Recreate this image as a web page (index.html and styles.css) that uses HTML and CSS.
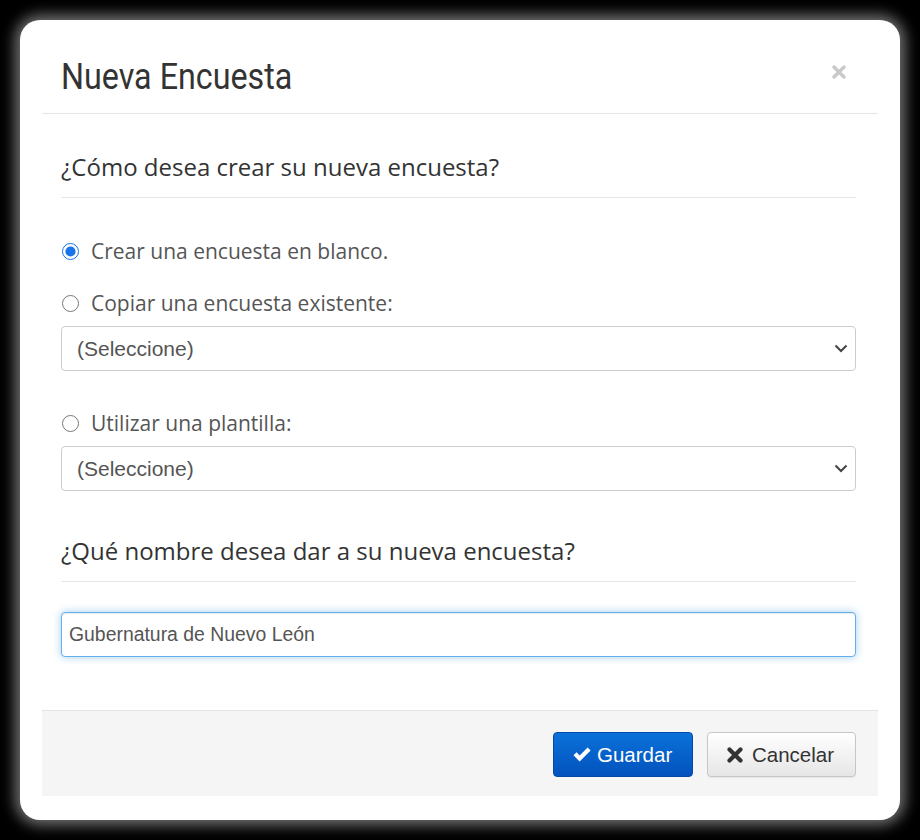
FILE: index.html
```html
<!DOCTYPE html>
<html lang="es">
<head>
<meta charset="utf-8">
<title>Nueva Encuesta</title>
<link rel="stylesheet" href="styles.css">
</head>
<body>
<div class="frame">
  <div class="modal">
    <div class="modal-header">
      <h3 class="title"><span class="title-text">Nueva Encuesta</span></h3>
      <button class="close" type="button" aria-label="Cerrar">
        <svg width="14" height="14" viewBox="0 0 14 14"><path d="M2 2 L12 12 M12 2 L2 12" stroke="#c9c9c9" stroke-width="3.4" stroke-linecap="round"/></svg>
      </button>
    </div>
    <div class="modal-body">
      <h4 class="section-title first">¿Cómo desea crear su nueva encuesta?</h4>
      <label class="radio r1"><input type="radio" name="modo" checked><span>Crear una encuesta en blanco.</span></label>
      <label class="radio r2"><input type="radio" name="modo"><span>Copiar una encuesta existente:</span></label>
      <div class="select">
        <span>(Seleccione)</span>
        <svg width="14" height="9" viewBox="0 0 14 9"><path d="M1.5 1.5 L7 7 L12.5 1.5" fill="none" stroke="#444" stroke-width="2"/></svg>
      </div>
      <label class="radio r3"><input type="radio" name="modo"><span>Utilizar una plantilla:</span></label>
      <div class="select">
        <span>(Seleccione)</span>
        <svg width="14" height="9" viewBox="0 0 14 9"><path d="M1.5 1.5 L7 7 L12.5 1.5" fill="none" stroke="#444" stroke-width="2"/></svg>
      </div>
      <h4 class="section-title second">¿Qué nombre desea dar a su nueva encuesta?</h4>
      <input class="text-input" type="text" value="Gubernatura de Nuevo León">
    </div>
    <div class="modal-footer">
      <button class="btn btn-primary" type="button">
        <svg width="20" height="17" viewBox="0 0 20 17"><path d="M1.5 9.2 L4.6 6.3 L7.6 9.4 L15.6 1.5 L18.6 4.5 L7.6 15.4 Z" fill="#fff"/></svg>
        <span>Guardar</span>
      </button>
      <button class="btn btn-default" type="button">
        <svg width="16" height="16" viewBox="0 0 16 16"><path d="M2.5 2.5 L13.5 13.5 M13.5 2.5 L2.5 13.5" stroke="#333" stroke-width="4.2" stroke-linecap="round"/></svg>
        <span>Cancelar</span>
      </button>
    </div>
  </div>
</div>
</body>
</html>
```
FILE: styles.css
```css
html, body {
  margin: 0;
  padding: 0;
  background: #000;
}
body {
  padding: 20px;
  font-family: "Open Sans", "Liberation Sans", sans-serif;
}
.frame {
  width: 836px;
  padding: 20px 22px 24px 22px;
  background: #fff;
  border-radius: 20px;
  box-shadow: 0 0 14px 5px rgba(255, 255, 255, 0.45);
}
.modal {
  display: flex;
  flex-direction: column;
}
.modal-header {
  height: 73px;
  border-bottom: 1px solid #e5e5e5;
  display: flex;
  align-items: center;
  justify-content: space-between;
  padding: 0 32px 0 19px;
}
.title {
  margin: 0;
  font-family: Roboto, "Liberation Sans", sans-serif;
  font-weight: 400;
  font-size: 37px;
  line-height: 40px;
  color: #333;
  padding-top: 0;
}
.title-text {
  display: inline-block;
  transform: scaleX(0.872);
  transform-origin: left center;
}
.close {
  border: 0;
  background: none;
  padding: 0;
  margin-top: -10px;
  display: flex;
}
.modal-body {
  padding: 0 22px 53px 19px;
  display: flex;
  flex-direction: column;
}
.section-title {
  margin: 0;
  font-weight: 400;
  font-size: 24px;
  line-height: 30px;
  color: #333;
  padding-bottom: 15px;
  border-bottom: 1px solid #e5e5e5;
}
.section-title.first {
  margin-top: 38px;
}
.section-title.second {
  margin-top: 45px;
}
.radio {
  display: flex;
  align-items: center;
  height: 30px;
  font-size: 21px;
  color: #555;
}
.radio input {
  width: 17px;
  height: 17px;
  margin: 0 12px 0 1px;
  accent-color: #1a73e8;
}
.r1 { margin-top: 38px; }
.r2 { margin-top: 22px; }
.r3 { margin-top: 37px; }
.select {
  margin-top: 8px;
  height: 43px;
  border: 1px solid #ccc;
  border-radius: 4px;
  display: flex;
  align-items: center;
  justify-content: space-between;
  padding: 0 7px 0 15px;
  font-family: "Liberation Sans", Arial, sans-serif;
  font-size: 21px;
  color: #555;
}
.text-input {
  margin: 30px 0 0 0;
  height: 45px;
  box-sizing: border-box;
  border: 1px solid #66afe9;
  border-radius: 4px;
  padding: 0 7px;
  font-family: "Liberation Sans", Arial, sans-serif;
  font-size: 19.4px;
  color: #555;
  outline: none;
  box-shadow: inset 0 1px 1px rgba(0, 0, 0, 0.075), 0 0 8px rgba(102, 175, 233, 0.6);
}
.modal-footer {
  border-top: 1px solid #e5e5e5;
  background: #f5f5f5;
  height: 86px;
  box-sizing: border-box;
  padding: 21px 22px 0 0;
  display: flex;
  justify-content: flex-end;
  align-items: flex-start;
  gap: 14px;
}
.btn {
  height: 45px;
  border-radius: 4px;
  display: flex;
  align-items: center;
  gap: 5px;
  font-family: "Liberation Sans", Arial, sans-serif;
  font-size: 20.5px;
  cursor: pointer;
}
.btn-primary {
  width: 140px;
  padding: 0 0 0 18px;
  color: #fff;
  border: 1px solid #0449a8;
  background: linear-gradient(to bottom, #0a72d9 0%, #0352bd 100%);
}
.btn-default {
  width: 149px;
  padding: 0 0 0 19px;
  gap: 9px;
  color: #333;
  border: 1px solid #c6c6c6;
  background: linear-gradient(to bottom, #ffffff 0%, #e6e6e6 100%);
  box-shadow: 0 1px 1px rgba(0, 0, 0, 0.06);
}
```
